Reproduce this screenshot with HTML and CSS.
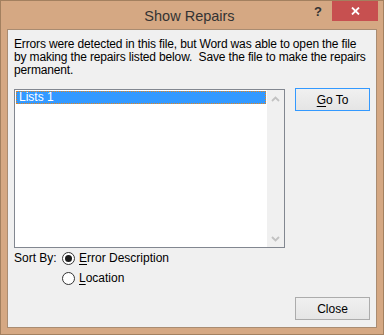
FILE: index.html
```html
<!DOCTYPE html>
<html>
<head>
<meta charset="utf-8">
<link rel="stylesheet" href="styles.css">
</head>
<body>
<div class="window">
  <div class="titlebar">
    <div class="spacer"></div>
    <div class="title">Show Repairs</div>
    <div class="controls">
      <span class="help">?</span>
      <span class="close">
        <svg width="9" height="8" viewBox="0 0 9 8"><path d="M1 0.5 L8 7.5 M8 0.5 L1 7.5" stroke="#fff" stroke-width="1.8" fill="none"/></svg>
      </span>
    </div>
  </div>
  <div class="client">
    <p class="msg">Errors were detected in this file, but Word was able to open the file<br>by making the repairs listed below.&nbsp; Save the file to make the repairs<br>permanent.</p>
    <div class="main-row">
      <div class="listbox">
        <div class="items">
          <div class="item selected">Lists 1</div>
        </div>
        <div class="scrollbar">
          <span class="arrow"><svg width="9" height="6" viewBox="0 0 9 6"><path d="M1 5 L4.5 1.5 L8 5" stroke="#c2c2c2" stroke-width="1.8" fill="none"/></svg></span>
          <span class="arrow"><svg width="9" height="6" viewBox="0 0 9 6"><path d="M1 1 L4.5 4.5 L8 1" stroke="#c2c2c2" stroke-width="1.8" fill="none"/></svg></span>
        </div>
      </div>
      <button class="btn default"><u>G</u>o To</button>
    </div>
    <div class="sort">
      <div class="sort-label">Sort By:</div>
      <div class="radios">
        <div class="radio"><span class="circle on"></span><span><u>E</u>rror Description</span></div>
        <div class="radio"><span class="circle"></span><span><u>L</u>ocation</span></div>
      </div>
    </div>
    <div class="footer">
      <button class="btn">Close</button>
    </div>
  </div>
</div>
</body>
</html>
```
FILE: styles.css
```css
* { box-sizing: border-box; }
html, body { margin: 0; padding: 0; }
body {
  font-family: "Liberation Sans", Arial, sans-serif;
  font-size: 12px;
  color: #000;
  background: #d5a883;
}
.window {
  width: 384px;
  height: 335px;
  border: 1px solid #a3805f;
  background: #d5a883;
  display: flex;
  flex-direction: column;
}
.titlebar {
  height: 28px;
  display: grid;
  grid-template-columns: 1fr auto 1fr;
  padding-right: 5px;
}
.title {
  font-size: 14.5px;
  line-height: 28px;
  padding-top: 1px;
  color: #333;
}
.controls {
  display: flex;
  justify-content: flex-end;
  align-items: flex-start;
}
.help {
  font-weight: bold;
  font-size: 13px;
  line-height: 12px;
  color: #333;
  margin-top: 5px;
  margin-right: 10px;
}
.close {
  width: 46px;
  height: 20px;
  background: #c75050;
  display: flex;
  align-items: center;
  justify-content: center;
}
.client {
  margin: 0 6px 6px 6px;
  height: 299px;
  border: 1px solid #a98c72;
  background: #f0f0f0;
  padding: 8px 6px 7px 6px;
  display: flex;
  flex-direction: column;
}
.msg {
  margin: 0;
  line-height: 13px;
  white-space: nowrap;
  letter-spacing: -0.15px;
}
.main-row {
  margin-top: 11px;
  display: flex;
  align-items: flex-start;
  gap: 10px;
}
.listbox {
  margin-top: 1px;
  width: 272px;
  height: 159px;
  border: 1px solid #828790;
  background: #fff;
  display: flex;
}
.items {
  flex: 1;
  padding: 1px;
}
.item {
  height: 13px;
  line-height: 12px;
  padding-left: 3px;
}
.item.selected {
  background: #3399ff;
  color: #fff;
  outline: 1px dotted #e8861a;
  outline-offset: -1px;
}
.scrollbar {
  width: 17px;
  background: #f0f0f0;
  display: flex;
  flex-direction: column;
  justify-content: space-between;
}
.arrow {
  height: 17px;
  display: flex;
  align-items: center;
  justify-content: center;
}
.btn {
  width: 75px;
  height: 23px;
  font-family: inherit;
  font-size: 12px;
  color: #000;
  border: 1px solid #acacac;
  background: linear-gradient(#f0f0f0, #e5e5e5);
  padding: 0;
  margin: 0;
}
.btn.default {
  border-color: #3399ff;
}
.btn u, .radio u { text-underline-offset: 2px; }
.sort {
  display: flex;
}
.sort-label {
  width: 48px;
  line-height: 20px;
}
.radios {
  display: flex;
  flex-direction: column;
}
.radio {
  height: 20px;
  display: flex;
  align-items: center;
  gap: 4px;
}
.circle {
  width: 13px;
  height: 13px;
  border-radius: 50%;
  border: 1px solid #333;
  background: #fff;
  display: flex;
  align-items: center;
  justify-content: center;
}
.circle.on::after {
  content: "";
  width: 7px;
  height: 7px;
  border-radius: 50%;
  background: #1a1a1a;
}
.footer {
  margin-top: auto;
  display: flex;
  justify-content: flex-end;
}
```
